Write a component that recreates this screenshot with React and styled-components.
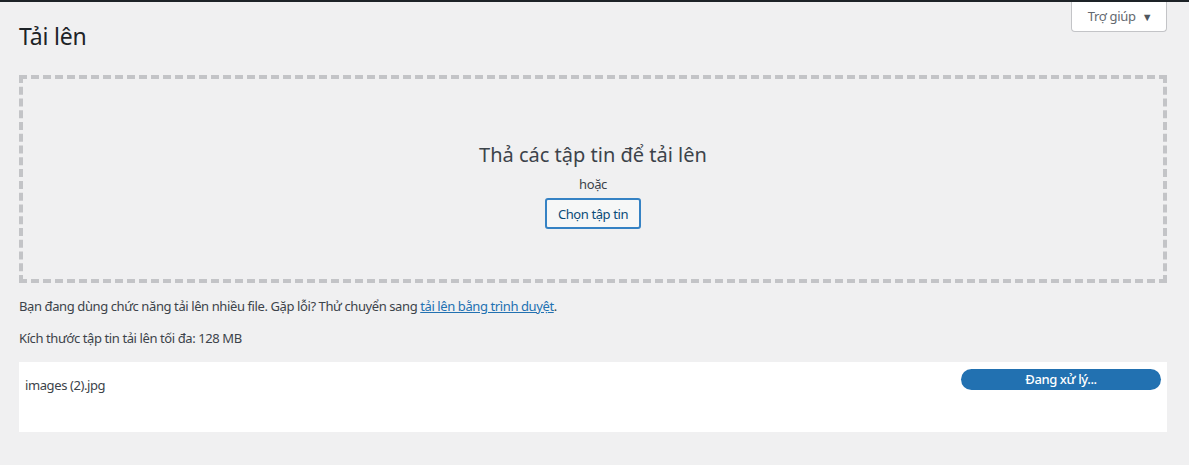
import React from 'react';
import styled, { createGlobalStyle } from 'styled-components';

const GlobalStyle = createGlobalStyle`
  html, body {
    margin: 0;
    padding: 0;
    background: #f0f0f1;
    font-family: "Noto Sans", "Open Sans", sans-serif;
    font-size: 13px;
    letter-spacing: -0.4px;
    color: #3c434a;
  }
`;

const TopBar = styled.div`
  height: 2px;
  background: #1d2327;
`;

const Wrap = styled.div`
  position: relative;
  padding: 0 22px 0 19px;
`;

const HelpTab = styled.button`
  position: absolute;
  top: 0;
  right: 22px;
  width: 96px;
  height: 30px;
  display: flex;
  align-items: center;
  justify-content: center;
  gap: 6px;
  background: #fff;
  border: 1px solid #c3c4c7;
  border-top: none;
  border-radius: 0 0 4px 4px;
  font-family: inherit;
  font-size: 13px;
  letter-spacing: -0.3px;
  color: #646970;
  padding: 0 0 1px 2px;
`;

const Caret = styled.span`
  font-size: 11px;
  color: #50575e;
`;

const Title = styled.h1`
  margin: 0;
  padding: 20px 0 0;
  font-size: 23px;
  font-weight: 400;
  line-height: 29px;
  letter-spacing: -0.2px;
  color: #1d2327;
`;

const DropZone = styled.div`
  margin-top: 24px;
  height: 188px;
  border: 4px dashed #c3c4c7;
  display: flex;
  flex-direction: column;
  align-items: center;
  justify-content: center;
  padding-top: 12px;
`;

const DropTitle = styled.p`
  margin: 0;
  font-size: 20px;
  line-height: 28px;
  letter-spacing: 0;
  color: #3c434a;
`;

const OrText = styled.p`
  margin: 5px 0 4px;
  font-size: 13px;
  line-height: 20px;
`;

const SelectButton = styled.button`
  height: 31px;
  padding: 0 11px;
  background: #f6f7f7;
  border: 2px solid #3582c4;
  border-radius: 3px;
  font-family: inherit;
  font-size: 13px;
  letter-spacing: -0.4px;
  color: #0a4b78;
`;

const Note = styled.p`
  margin: ${(p) => p.$top}px 0 0;
  font-size: 13px;
  line-height: 20px;
  color: #3c434a;
`;

const Link = styled.a`
  color: #2271b1;
  text-decoration: underline;
`;

const MediaItem = styled.div`
  margin-top: 14px;
  height: 70px;
  background: #fff;
  box-shadow: 0 1px 0 #dcdcde;
  display: flex;
  justify-content: space-between;
  align-items: flex-start;
  padding: 7px 6px 0 6px;
  box-sizing: border-box;
`;

const FileName = styled.div`
  font-size: 13px;
  line-height: 20px;
  margin-top: 6px;
  color: #3c434a;
`;

const Progress = styled.div`
  width: 200px;
  height: 21px;
  border-radius: 11px;
  background: #2271b1;
  color: #fff;
  font-size: 13px;
  font-weight: 500;
  line-height: 21px;
  text-align: center;
`;

export default function App() {
  return (
    <>
      <GlobalStyle />
      <TopBar />
      <Wrap>
        <HelpTab>
          Trợ giúp <Caret>▼</Caret>
        </HelpTab>
        <Title>Tải lên</Title>
        <DropZone>
          <DropTitle>Thả các tập tin để tải lên</DropTitle>
          <OrText>hoặc</OrText>
          <SelectButton>Chọn tập tin</SelectButton>
        </DropZone>
        <Note $top={13}>
          Bạn đang dùng chức năng tải lên nhiều file. Gặp lỗi? Thử chuyển sang{' '}
          <Link href="#">tải lên bằng trình duyệt</Link>.
        </Note>
        <Note $top={12}>Kích thước tập tin tải lên tối đa: 128 MB</Note>
        <MediaItem>
          <FileName>images (2).jpg</FileName>
          <Progress>Đang xử lý...</Progress>
        </MediaItem>
      </Wrap>
    </>
  );
}
